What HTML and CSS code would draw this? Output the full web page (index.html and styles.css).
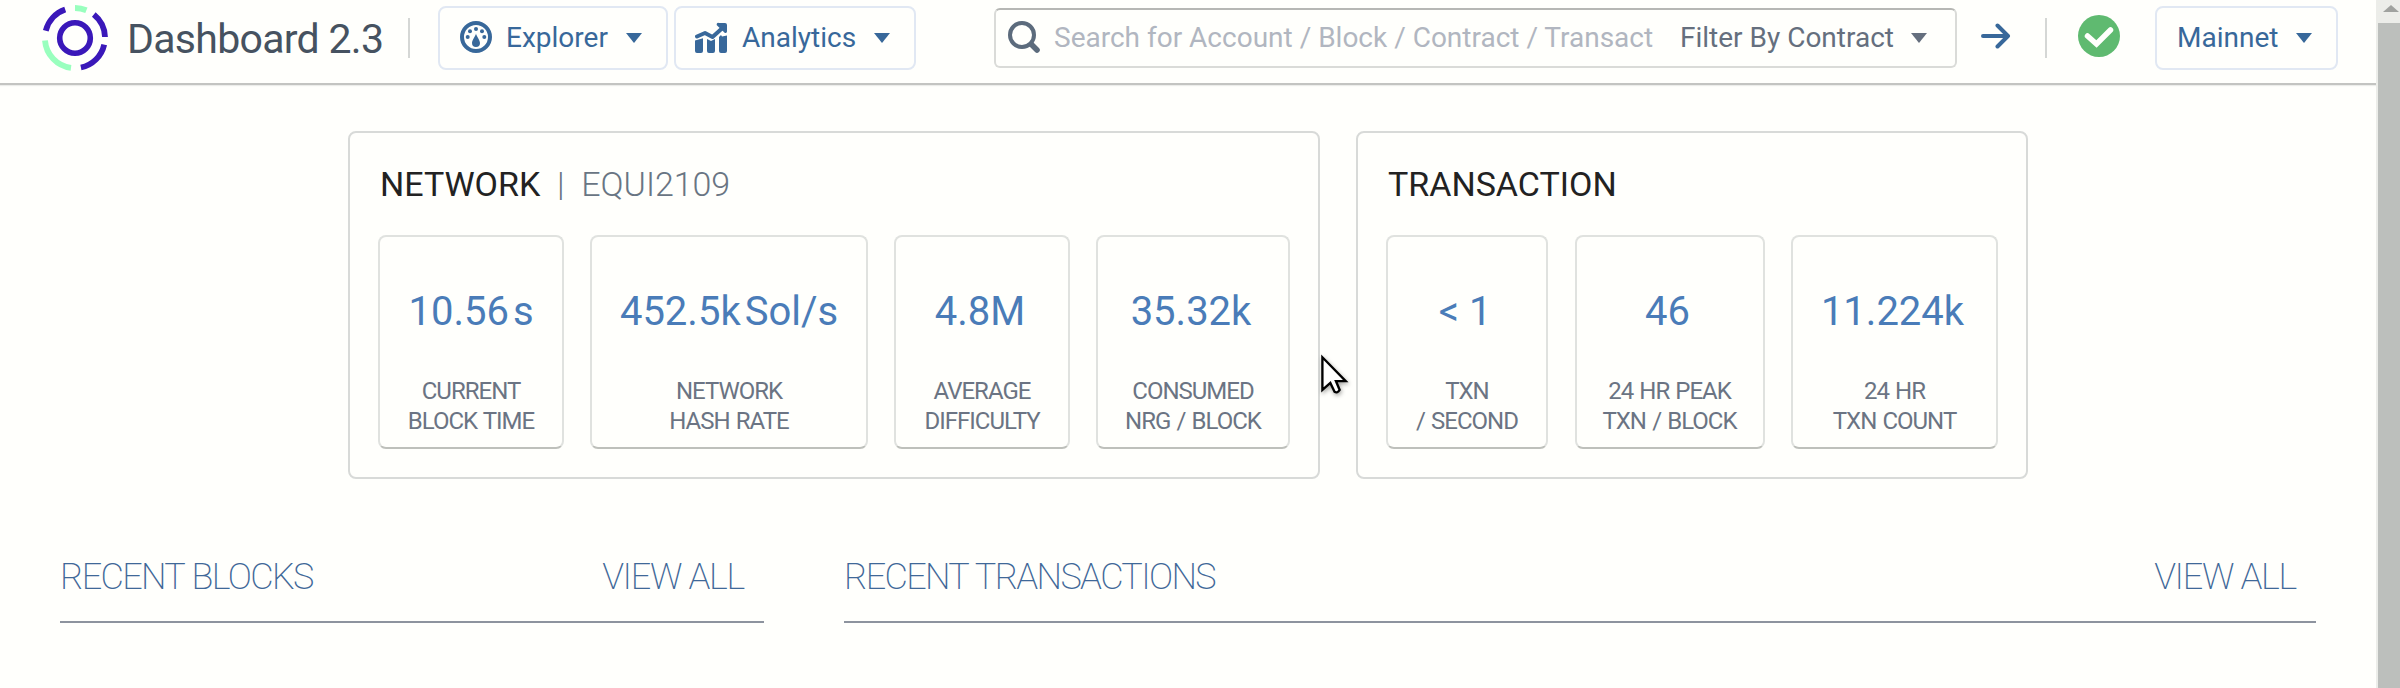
FILE: index.html
```html
<!DOCTYPE html>
<html lang="en">
<head>
<meta charset="utf-8">
<title>Dashboard 2.3</title>
<link rel="stylesheet" href="styles.css">
</head>
<body>
<div class="page">
  <header class="topbar">
    <svg class="logo" viewBox="-35 -35 70 70">
      <circle r="15.3" fill="none" stroke="#3a18b9" stroke-width="5.6"/>
      <g fill="none" stroke-width="5.8">
        <path stroke="#3a18b9" d="M-29.2 -7.3A30 30 0 0 1 -9.8 -28.4M18.8 -23.4A30 30 0 0 1 30 -1M29.2 6.6A30 30 0 0 1 5.9 29.5"/>
        <path stroke="#99ffbe" d="M0 -30A30 30 0 0 1 11.4 -27.7M-4 29.8A30 30 0 0 1 -30 2.4"/>
      </g>
    </svg>
    <span class="brand">Dashboard 2.3</span>
    <span class="rule rule-brand"></span>
    <button class="btn btn-explorer">
      <svg class="ico" viewBox="0 0 32 32" fill="#38689a">
        <circle cx="16" cy="16" r="14" fill="none" stroke="#38689a" stroke-width="4"/>
        <circle cx="7.7" cy="16" r="2"/><circle cx="10" cy="10.2" r="2"/><circle cx="16" cy="8" r="2"/><circle cx="22" cy="10.2" r="2"/><circle cx="24.3" cy="16" r="2"/>
        <path d="M16 12.4c.6 3 4 6.500 4 9.600a4 4 0 0 1-8 0c0-3.100 3.400-6.600 4-9.600z"/>
      </svg>
      <span class="text">Explorer</span><i class="caret"></i>
    </button>
    <button class="btn btn-analytics">
      <svg class="ico" viewBox="0 0 32 32" fill="#38689a">
        <path d="M0 19.500l8-2.200V30a2 2 0 0 1-2 2H2a2 2 0 0 1-2-2zM12 18l4 2 4-2V30a2 2 0 0 1-2 2h-4a2 2 0 0 1-2-2zM24 16l2-2 1 1.500 5-1V30a2 2 0 0 1-2 2h-4a2 2 0 0 1-2-2z"/>
        <path d="M2 15.500L10 12l7.500 4L28 6.500" fill="none" stroke="#38689a" stroke-width="4" stroke-linecap="round" stroke-linejoin="round"/>
        <path d="M24 2h6a2 2 0 0 1 2 2v6.500a1.500 1.500 0 0 1-2.600 1L22.600 5A1.600 1.600 0 0 1 24 2z"/>
      </svg>
      <span class="text">Analytics</span><i class="caret"></i>
    </button>
    <div class="search">
      <svg class="ico" viewBox="0 0 32 32" fill="none" stroke="#5c6b7c">
        <circle cx="14" cy="14" r="12" stroke-width="4"/><path d="M24 24l5 5" stroke-width="5.600" stroke-linecap="round"/>
      </svg>
      <span class="placeholder text">Search for Account / Block / Contract / Transact</span>
      <span class="filter text">Filter By Contract</span><i class="caret"></i>
    </div>
    <svg class="go" viewBox="0 0 30 26" fill="none" stroke="#38689a" stroke-width="4" stroke-linecap="round" stroke-linejoin="round"><path d="M2 13H27M16.500 2.500L27 13L16.500 23.500"/></svg>
    <span class="rule rule-status"></span>
    <svg class="status" viewBox="0 0 42 42"><circle cx="21" cy="21" r="21" fill="#5fba70"/><path d="M9.500 21L18.500 29L32.500 15" fill="none" stroke="#fffffc" stroke-width="5.500" stroke-linecap="round"/></svg>
    <button class="btn btn-network"><span class="text">Mainnet</span><i class="caret"></i></button>
  </header>

  <section class="panels">
    <article class="panel">
      <h2 class="panel-title">NETWORK<span class="bar">|</span><span class="sub">EQUI2109</span></h2>
      <div class="tiles tiles-network">
        <div class="tile"><div class="value">10.56<span class="unit">s</span></div><div class="label">CURRENT<br>BLOCK TIME</div></div>
        <div class="tile"><div class="value">452.5k<span class="unit">Sol/s</span></div><div class="label">NETWORK<br>HASH RATE</div></div>
        <div class="tile"><div class="value">4.8M<span class="unit"></span></div><div class="label">AVERAGE<br>DIFFICULTY</div></div>
        <div class="tile"><div class="value">35.32k<span class="unit"></span></div><div class="label">CONSUMED<br>NRG / BLOCK</div></div>
      </div>
    </article>
    <article class="panel">
      <h2 class="panel-title">TRANSACTION</h2>
      <div class="tiles tiles-transaction">
        <div class="tile"><div class="value">&lt; 1<span class="unit"></span></div><div class="label">TXN<br>/ SECOND</div></div>
        <div class="tile"><div class="value">46<span class="unit"></span></div><div class="label">24 HR PEAK<br>TXN / BLOCK</div></div>
        <div class="tile"><div class="value">11.224k<span class="unit"></span></div><div class="label">24 HR<br>TXN COUNT</div></div>
      </div>
    </article>
  </section>

  <section class="lists">
    <div class="list-head"><span class="list-title">RECENT BLOCKS</span><span>VIEW ALL</span></div>
    <div class="list-head"><span class="list-title">RECENT TRANSACTIONS</span><span>VIEW ALL</span></div>
  </section>
</div>
<div class="scrollbar"><i class="up"></i><div class="thumb"></div></div>
<svg class="cursor" viewBox="0 0 30 44"><path d="M1.500 3V38L10 30.500L14.500 40Q17.500 42 20 38L16 28.500H26.500Z" fill="#fff" stroke="#000" stroke-width="2.500"/></svg>
</body>
</html>
```
FILE: styles.css
```css
* { box-sizing: border-box; }
body {
  margin: 0;
  height: 688px;
  display: flex;
  overflow: hidden;
  background: #fffffc;
  font-family: Roboto, "Liberation Sans", sans-serif;
}
.page { width: 2376px; flex: none; }
.topbar {
  height: 85px;
  padding: 0 38px 9px 40px;
  display: flex;
  align-items: center;
  border-bottom: 2px solid #c3c4c1;
  box-shadow: 0 1px 1px #ecedea;
  font-size: 28px;
}
.logo { width: 70px; height: 70px; flex: none; margin-top: 2px; }
.brand { width: 279px; flex: none; margin: 3px 0 0 17px; font-size: 41px; line-height: 48px; letter-spacing: -0.7px; color: #465260; white-space: nowrap; }
.rule { width: 2px; height: 40px; background: #d5d7d5; flex: none; }
.rule-brand { margin: 2px 28px 0 2px; }
.btn {
  height: 64px;
  margin: 2px 0 0;
  padding: 0 0 0 20px;
  display: flex;
  align-items: center;
  border: 2px solid #e1e8f3;
  border-radius: 8px;
  background: transparent;
  color: #38689a;
  font: 28px Roboto, "Liberation Sans", sans-serif;
  flex: none;
}
.text { padding-bottom: 2px; }
.ico { width: 32px; height: 32px; flex: none; margin: 0 14px 2px 0; }
.caret { width: 0; height: 0; border: solid transparent; border-width: 10px 8px 0; border-top-color: currentColor; margin-left: 18px; }
.btn-explorer { width: 230px; }
.btn-analytics { width: 242px; margin-left: 6px; padding-left: 19px; }
.btn-analytics .ico { margin-right: 15px; }
.search {
  width: 963px;
  flex: none;
  height: 60px;
  margin: 2px 0 0 78px;
  padding-left: 12px;
  display: flex;
  align-items: center;
  border: 2px solid #dadbd8;
  border-top-color: #b6b7b4;
  border-radius: 6px;
  color: #656f7e;
  white-space: nowrap;
}
.placeholder { width: 626px; color: #b1b6c0; }
.search .caret { margin-left: 17px; }
.go { width: 30px; height: 26px; flex: none; margin: 0 0 2px 24px; }
.rule-status { margin: 2px 31px 0 34px; }
.status { width: 42px; height: 42px; flex: none; margin: 0 35px 2px 0; }
.btn-network { width: 183px; padding-left: 20px; }

.panels { display: flex; gap: 36px; padding: 46px 0 0 348px; }
.panel { height: 348px; padding: 30px 28px; border: 2px solid #d8dad8; border-radius: 8px; }
.panel:first-child { width: 972px; }
.panel:last-child { width: 672px; }
.panel-title { margin: 1px 0 31px 2px; font-size: 34px; line-height: 40px; font-weight: 400; color: #222; display: flex; }
.bar { width: 41px; text-align: center; font-weight: 300; color: #697583; }
.sub { font-weight: 300; color: #697583; letter-spacing: -0.05px; }
.tiles { display: grid; gap: 26px; }
.tiles-network { grid-template-columns: 186px 278px 176px 194px; }
.tiles-transaction { grid-template-columns: 162px 190px 207px; column-gap: 26.5px; }
.tile { height: 214px; padding-top: 51px; border: 2px solid #e0e2df; border-bottom-color: #bec0bb; border-radius: 8px; text-align: center; white-space: nowrap; }
.value { font-size: 40px; line-height: 48px; color: #4a7cb8; }
.unit { display: inline-block; margin-left: 4px; }
.label { margin-top: 40px; font-size: 24px; line-height: 30px; letter-spacing: -1px; word-spacing: 1.2px; color: #6b7483; }

.lists { display: grid; grid-template-columns: 704px 1472px; gap: 80px; padding: 72px 0 0 60px; }
.list-head { height: 72px; padding: 4px 20px 0 0; display: flex; justify-content: space-between; border-bottom: 2px solid #8d939e; font-size: 36px; line-height: 44px; font-weight: 200; letter-spacing: -1.3px; color: #3f6898; }
.list-title { letter-spacing: -1.65px; word-spacing: 1px; }

.scrollbar { width: 24px; flex: none; padding: 5px 0 0 2px; background: #ecede9; }
.up { display: block; width: 0; height: 0; margin: 0 0 11px 5px; border: solid transparent; border-width: 0 8px 7px; border-bottom-color: #a0a29f; }
.thumb { height: 665px; background: #bcbfbc; }
.cursor { position: absolute; left: 1321px; top: 354px; width: 28px; height: 42px; filter: drop-shadow(1px 2px 2px rgba(0,0,0,.35)); }
```
